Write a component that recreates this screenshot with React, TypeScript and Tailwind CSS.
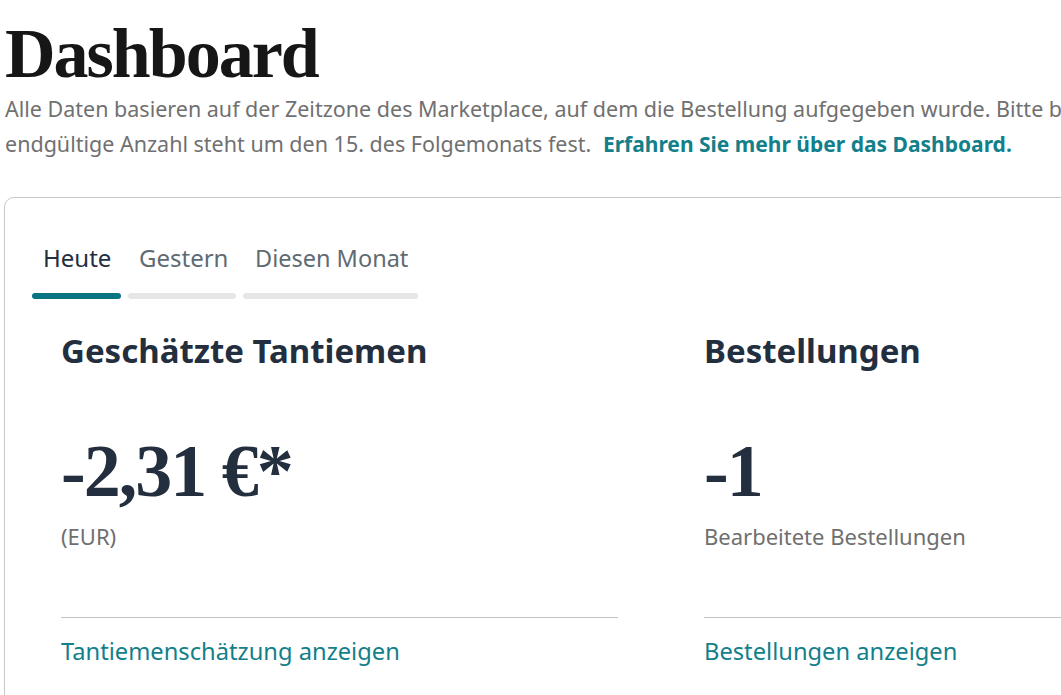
import React from "react";

const sans = { fontFamily: '"Noto Sans", "Open Sans", sans-serif' };

export default function App() {
  return (
    <div className="w-[1061px] h-[695px] overflow-hidden bg-white" style={sans}>
      <div className="pl-[5px] pt-[14px]">
        <h1
          className="text-[70px] leading-[80px] font-bold text-[#161616] tracking-[-2px]"
          style={{ fontFamily: '"Liberation Serif", "DejaVu Serif", serif' }}
        >
          Dashboard
        </h1>
        <p className="mt-[-3px] text-[21.5px] leading-[35px] text-[#707070] whitespace-nowrap">
          Alle Daten basieren auf der Zeitzone des Marketplace, auf dem die Bestellung aufgegeben wurde. Bitte beachten Sie, dass die
          <br />
          endgültige Anzahl steht um den 15. des Folgemonats fest.{" "}
          <a className="ml-[6px] text-[21px] font-bold text-[#137f8a]">Erfahren Sie mehr über das Dashboard.</a>
        </p>
      </div>
      <div className="ml-[4px] mt-[35px] w-[1100px] h-[520px] rounded-[10px] border border-[#c8c8c8] pl-[27px] pt-[42px]">
        <div className="flex gap-[7px]">
          <div className="flex flex-col w-[89px]">
            <span className="text-[24px] leading-[36px] text-[#232f3e] pl-[11px]">Heute</span>
            <div className="mt-[17px] h-[6px] rounded-full bg-[#087580]" />
          </div>
          <div className="flex flex-col w-[108px]">
            <span className="text-[24px] leading-[36px] text-[#5f6b73] pl-[11px]">Gestern</span>
            <div className="mt-[17px] h-[6px] rounded-full bg-[#e6e6e6]" />
          </div>
          <div className="flex flex-col w-[175px]">
            <span className="text-[23.5px] leading-[36px] text-[#5f6b73] pl-[12px] whitespace-nowrap">Diesen Monat</span>
            <div className="mt-[17px] h-[6px] rounded-full bg-[#e6e6e6]" />
          </div>
        </div>
        <div className="grid grid-cols-[557px_557px] gap-x-[86px] pl-[29px] pt-[30px]">
          <Metric
            title="Geschätzte Tantiemen"
            value="-2,31 €*"
            sub="(EUR)"
            link="Tantiemenschätzung anzeigen"
          />
          <Metric
            title="Bestellungen"
            value="-1"
            sub="Bearbeitete Bestellungen"
            link="Bestellungen anzeigen"
          />
        </div>
      </div>
    </div>
  );
}

function Metric({ title, value, sub, link }: { title: string; value: string; sub: string; link: string }) {
  return (
    <div className="flex flex-col">
      <h2 className="text-[33px] leading-[44px] font-bold text-[#232f3e] whitespace-nowrap">{title}</h2>
      <div
        className="mt-[58px] text-[74px] leading-[80px] font-bold text-[#232f3e] tracking-[-2px]"
        style={{ fontFamily: '"Liberation Serif", "DejaVu Serif", serif' }}
      >
        {value}
      </div>
      <div className="mt-[11px] text-[22px] leading-[28px] text-[#6f6f6f]">{sub}</div>
      <div className="mt-[67px] h-px bg-[#c4c4c4]" />
      <a className="mt-[17px] text-[23.7px] leading-[32px] text-[#137f8a]">{link}</a>
    </div>
  );
}
